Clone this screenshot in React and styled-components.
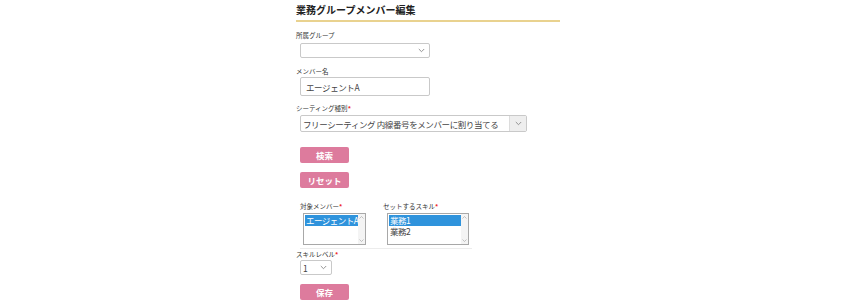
import React from 'react';
import styled, { createGlobalStyle } from 'styled-components';

const GlobalStyle = createGlobalStyle`
  html, body {
    margin: 0;
    padding: 0;
    background: #fff;
  }
  body {
    font-family: "Noto Sans CJK JP", "Liberation Sans", sans-serif;
    color: #333;
  }
`;

const Page = styled.div`
  width: 264px;
  margin: 0 auto;
  padding-top: 2px;
  padding-left: 6px;
`;

const Title = styled.h2`
  margin: 0;
  height: 16px;
  font-size: 10px;
  line-height: 16px;
  font-weight: 700;
  color: #222;
  padding: 0 0 2px 0;
  border-bottom: 2px solid #e9d28f;
`;

const Form = styled.div`
  padding: 8px 0 0 4px;
  display: flex;
  flex-direction: column;
  align-items: flex-start;
`;

const Label = styled.div`
  height: 10px;
  font-size: 6.5px;
  line-height: 10px;
  color: #333;
  margin: ${({ $mt }) => $mt || 0}px 0 0 ${({ $ml }) => $ml ?? -4}px;
  white-space: nowrap;
`;

const Req = styled.span`
  color: #ee2a2a;
  font-weight: 700;
`;

const SelectBox = styled.div`
  box-sizing: border-box;
  width: ${({ $w }) => $w}px;
  height: ${({ $h }) => $h}px;
  margin-top: ${({ $mt }) => $mt || 0}px;
  border: 1px solid #c9c9c9;
  border-radius: 2px;
  background: #fff;
  display: flex;
  align-items: stretch;
  font-size: 8.5px;
  color: #444;
`;

const SelectText = styled.div`
  flex: 1;
  display: flex;
  align-items: center;
  padding-left: 2px;
  white-space: nowrap;
  overflow: hidden;
  letter-spacing: -0.4px;
`;

const Arrow = styled.div`
  width: 16px;
  display: flex;
  align-items: center;
  justify-content: center;
  background: ${({ $filled }) => ($filled ? '#eeeeee' : 'transparent')};
  border-left: ${({ $filled }) => ($filled ? '1px solid #dcdcdc' : 'none')};
`;

const Chevron = () => (
  <svg width="7" height="5" viewBox="0 0 7 5">
    <path d="M0.8 1 L3.5 3.7 L6.2 1" fill="none" stroke="#888" strokeWidth="0.9" />
  </svg>
);

const TextInput = styled.div`
  box-sizing: border-box;
  width: 130px;
  height: 19px;
  margin-top: 1px;
  border: 1px solid #c9c9c9;
  border-radius: 2px;
  padding-left: 5px;
  display: flex;
  align-items: center;
  font-size: 8.5px;
  letter-spacing: -0.4px;
  color: #444;
`;

const Button = styled.div`
  width: 49px;
  height: 16px;
  margin-top: ${({ $mt }) => $mt}px;
  border-radius: 2px;
  background: #dd7b9d;
  color: #fff;
  font-size: 8.5px;
  font-weight: 700;
  display: flex;
  align-items: center;
  justify-content: center;
`;

const ListRow = styled.div`
  display: flex;
  gap: 17px;
  margin-top: 13px;
  padding-bottom: 3px;
  border-bottom: 1px solid #ececec;
  width: 172px;
`;

const ListCol = styled.div`
  display: flex;
  flex-direction: column;
  align-items: flex-start;
`;

const ListBox = styled.div`
  box-sizing: border-box;
  width: ${({ $w }) => $w}px;
  height: 32px;
  margin: 2px 0 0 ${({ $ml }) => $ml}px;
  border: 1px solid #a8a8a8;
  display: flex;
  background: #fff;
`;

const Options = styled.div`
  flex: 1;
  display: flex;
  flex-direction: column;
  padding: 1px 0 0 1px;
  overflow: hidden;
`;

const Option = styled.div`
  font-size: 8.5px;
  line-height: 11px;
  padding-left: 1px;
  white-space: nowrap;
  letter-spacing: -0.5px;
  color: ${({ $sel }) => ($sel ? '#fff' : '#444')};
  background: ${({ $sel }) => ($sel ? '#2f93dc' : 'transparent')};
`;

const Scrollbar = styled.div`
  width: 7px;
  background: #f4f4f4;
  display: flex;
  flex-direction: column;
  justify-content: space-between;
  align-items: center;
  padding: 2px 0;
`;

const Tri = ({ up }) => (
  <svg width="5" height="3" viewBox="0 0 5 3">
    <path d={up ? 'M0.5 2.5 L2.5 0.5 L4.5 2.5' : 'M0.5 0.5 L2.5 2.5 L4.5 0.5'} fill="none" stroke="#aaa" strokeWidth="0.7" />
  </svg>
);

export default function App() {
  return (
    <>
      <GlobalStyle />
      <Page>
        <Title>業務グループメンバー編集</Title>
        <Form>
          <Label>所属グループ</Label>
          <SelectBox $w={130} $h={15} $mt={3}>
            <SelectText />
            <Arrow><Chevron /></Arrow>
          </SelectBox>

          <Label $mt={8}>メンバー名</Label>
          <TextInput>エージェントA</TextInput>

          <Label $mt={7}>シーティング種別<Req>*</Req></Label>
          <SelectBox $w={227} $h={17} $mt={2}>
            <SelectText>フリーシーティング 内線番号をメンバーに割り当てる</SelectText>
            <Arrow $filled><Chevron /></Arrow>
          </SelectBox>

          <Button $mt={15}>検索</Button>
          <Button $mt={9}>リセット</Button>

          <ListRow>
            <ListCol>
              <Label $ml={0}>対象メンバー<Req>*</Req></Label>
              <ListBox $w={63} $ml={3}>
                <Options>
                  <Option $sel>エージェントA</Option>
                </Options>
                <Scrollbar><Tri up /><Tri /></Scrollbar>
              </ListBox>
            </ListCol>
            <ListCol>
              <Label $ml={0}>セットするスキル<Req>*</Req></Label>
              <ListBox $w={82} $ml={4}>
                <Options>
                  <Option $sel>業務1</Option>
                  <Option>業務2</Option>
                </Options>
                <Scrollbar><Tri up /><Tri /></Scrollbar>
              </ListBox>
            </ListCol>
          </ListRow>

          <Label>スキルレベル<Req>*</Req></Label>
          <SelectBox $w={32} $h={15} $mt={1}>
            <SelectText>1</SelectText>
            <Arrow><Chevron /></Arrow>
          </SelectBox>

          <Button $mt={9}>保存</Button>
        </Form>
      </Page>
    </>
  );
}
